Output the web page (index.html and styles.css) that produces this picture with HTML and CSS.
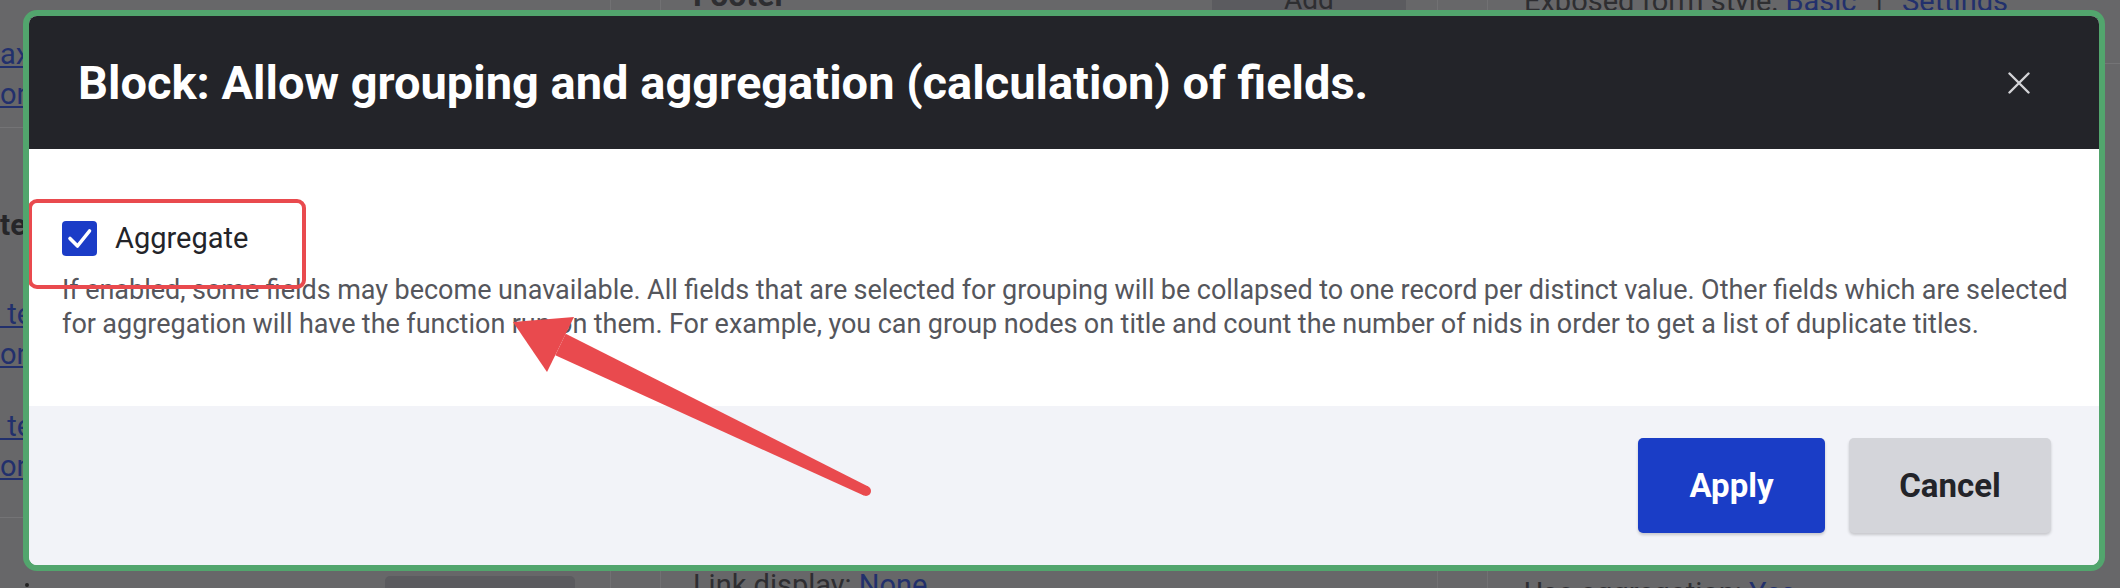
FILE: index.html
```html
<!DOCTYPE html>
<html lang="en">
<head>
<meta charset="utf-8">
<title>Block: Allow grouping and aggregation</title>
<link rel="stylesheet" href="styles.css">
</head>
<body>
<div class="page">
  <div class="col col-left">
    <a class="lnk lnk-first">axon</a>
    <a class="lnk">on</a>
    <hr class="rule rule-a">
    <div class="sect">tent</div>
    <a class="lnk lnk-pair">&nbsp;te</a>
    <a class="lnk">on</a>
    <a class="lnk lnk-pair2">&nbsp;te</a>
    <a class="lnk">on</a>
    <hr class="rule rule-b">
    <div class="left-bottom">
      <span class="dot"></span>
      <span class="ghost-btn"></span>
    </div>
  </div>
  <div class="col col-narrow"></div>
  <div class="col col-mid">
    <div class="mid-top">
      <span class="mid-head">Footer</span>
      <span class="add-btn">Add</span>
    </div>
    <div class="mid-bottom">Link display: <a class="lnk-in">None</a></div>
  </div>
  <div class="col col-narrow"></div>
  <div class="col col-right">
    <div class="right-top">Exposed form style: <a class="lnk-in">Basic</a> <span class="sep">|</span> <a class="lnk-in">Settings</a></div>
    <hr class="rule rule-right">
    <div class="right-bottom">Use aggregation: <a class="lnk-in">Yes</a></div>
  </div>
</div>

<div class="modal">
  <div class="modal-head">
    <h1 class="modal-title">Block: Allow grouping and aggregation (calculation) of fields.</h1>
    <button class="modal-close" aria-label="Close">
      <svg width="22" height="22" viewBox="0 0 22 22"><path d="M1.5 1.5 L20.5 20.5 M20.5 1.5 L1.5 20.5" stroke="#d4d4d8" stroke-width="2.4" stroke-linecap="round" fill="none"/></svg>
    </button>
  </div>
  <div class="modal-body">
    <label class="check-row">
      <span class="checkbox">
        <svg width="35" height="35" viewBox="0 0 35 35"><path d="M8 17.5 L15.5 25 L27.5 10" stroke="#fff" stroke-width="3.6" stroke-linecap="round" stroke-linejoin="round" fill="none"/></svg>
      </span>
      <span class="check-label">Aggregate</span>
    </label>
    <p class="desc">If enabled, some fields may become unavailable. All fields that are selected for grouping will be collapsed to one record per distinct value. Other fields which are selected for aggregation will have the function run on them. For example, you can group nodes on title and count the number of nids in order to get a list of duplicate titles.</p>
  </div>
  <div class="modal-foot">
    <button class="btn btn-primary">Apply</button>
    <button class="btn btn-secondary">Cancel</button>
  </div>
</div>

<svg class="arrow" width="2120" height="588" viewBox="0 0 2120 588">
  <polygon fill="#e94a4e" points="565.7,333.7 868.2,486.5 863.8,495.5 555.3,355.3"/>
  <circle cx="866" cy="491" r="5" fill="#e94a4e"/>
  <polygon fill="#e94a4e" points="513,322 574,317 547,372"/>
</svg>
</body>
</html>
```

FILE: styles.css
```css
* { box-sizing: border-box; }
html, body { margin: 0; padding: 0; }
body {
  width: 2120px;
  height: 588px;
  overflow: hidden;
  position: relative;
  font-family: Roboto, "Liberation Sans", Arial, sans-serif;
  background: #676769;
}

/* dimmed page behind the dialog */
.page {
  display: grid;
  grid-template-columns: 610px 50px 777px 50px 1fr;
  height: 588px;
  color: #2e2e31;
  font-size: 29px;
}
.col { border-left: 1px solid #717173; display: flex; flex-direction: column; }
.col-left { border-left: none; font-size: 29px; }
.lnk { display: block; color: #22306c; text-decoration: underline; line-height: 40px; white-space: nowrap; }
.lnk-first { margin-top: 34px; }
.rule { border: 0; border-top: 1px solid #747476; margin: 0; width: 100%; }
.rule-a { margin-top: 13px; }
.sect { margin-top: 77px; font-weight: 700; font-size: 30px; line-height: 40px; color: #262629; }
.lnk-pair { margin-top: 49px; }
.lnk-pair2 { margin-top: 32px; }
.rule-b { margin-top: 31px; }
.left-bottom { margin-top: 58px; display: flex; align-items: flex-start; }
.dot { width: 4px; height: 4px; border-radius: 50%; background: #222; margin: 7px 0 0 25px; }
.ghost-btn { width: 190px; height: 30px; background: #5b5b5f; border-radius: 5px; margin-left: 356px; }

.col-mid { justify-content: space-between; padding-left: 32px; }
.mid-top { display: flex; align-items: flex-start; margin-top: -22px; }
.mid-head { font-weight: 700; font-size: 32px; line-height: 34px; }
.add-btn { margin-left: auto; margin-right: 31px; width: 194px; height: 32px; background: #5b5b5f; text-align: center; font-size: 28px; line-height: 44px; }
.mid-bottom { margin-bottom: 4px; line-height: 34px; }
.lnk-in { color: #22306c; text-decoration: underline; }
.sep { margin: 0 12px; }

.col-right { padding-left: 36px; }
.right-top { margin-top: -16px; line-height: 34px; }
.rule-right { margin: 45px 0 0 -36px; width: calc(100% + 36px); }
.right-bottom { margin-top: auto; margin-bottom: -4px; line-height: 34px; }

/* dialog */
.modal {
  position: absolute;
  left: 23px;
  top: 10px;
  width: 2082px;
  height: 561px;
  border: 6px solid #52a56d;
  border-radius: 14px;
  overflow: hidden;
  display: flex;
  flex-direction: column;
  background: #fff;
}
.modal-head {
  height: 133px;
  flex: none;
  background: #232429;
  display: flex;
  align-items: center;
  justify-content: space-between;
  padding: 0 69px 0 49px;
}
.modal-title {
  margin: 0;
  color: #fff;
  font-weight: 700;
  font-size: 47px;
  line-height: 52px;
}
.modal-close {
  width: 22px;
  height: 22px;
  padding: 0;
  border: 0;
  background: none;
  display: block;
}
.modal-close svg { display: block; }

.modal-body {
  flex: 1;
  padding: 71px 20px 0 33px;
}
.check-row {
  position: relative;
  display: flex;
  align-items: center;
  gap: 18px;
  height: 36px;
}
.check-row::before {
  content: "";
  position: absolute;
  left: -34px;
  top: -21px;
  width: 270px;
  height: 82px;
  border: 4px solid #e94a4e;
  border-radius: 9px;
}
.checkbox {
  width: 35px;
  height: 35px;
  background: #1b3cc7;
  border-radius: 4px;
  flex: none;
}
.checkbox svg { display: block; }
.check-label {
  font-size: 29px;
  color: #232429;
  line-height: 36px;
}
.desc {
  margin: 17px 0 0;
  font-size: 27px;
  line-height: 34px;
  color: #55565c;
  word-spacing: -0.3px;
}

.modal-foot {
  height: 159px;
  flex: none;
  background: #f2f3f8;
  display: flex;
  justify-content: flex-end;
  align-items: flex-start;
  gap: 24px;
  padding: 32px 48px 0;
}
.btn {
  height: 95px;
  border: 0;
  border-radius: 5px;
  font-family: Roboto, "Liberation Sans", Arial, sans-serif;
  font-weight: 700;
  font-size: 33px;
  box-shadow: 0 2px 3px rgba(0, 0, 0, 0.18);
}
.btn-primary { width: 187px; background: #1a3dc6; color: #fff; }
.btn-secondary { width: 202px; background: #d4d5da; color: #232429; }

.arrow {
  position: absolute;
  left: 0;
  top: 0;
  pointer-events: none;
}
```
